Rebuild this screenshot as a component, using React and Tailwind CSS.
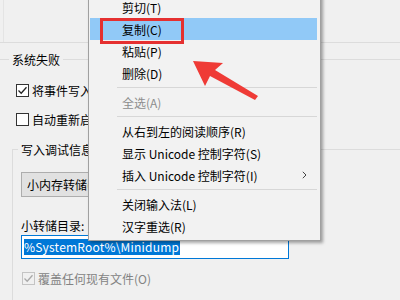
import React from "react";

const menuItems = [
  { label: "剪切(T)" },
  { label: "复制(C)", active: true },
  { label: "粘贴(P)" },
  { label: "删除(D)" },
  { sep: true },
  { label: "全选(A)", disabled: true },
  { sep: true },
  { label: "从右到左的阅读顺序(R)" },
  { label: "显示 Unicode 控制字符(S)" },
  { label: "插入 Unicode 控制字符(I)", sub: true },
  { sep: true },
  { label: "关闭输入法(L)" },
  { label: "汉字重选(R)" },
];

function CheckBox({ checked, disabled }) {
  return (
    <span
      className={
        "flex h-[13px] w-[13px] shrink-0 items-center justify-center border " +
        (disabled ? "border-[#c4c4c4] bg-[#f0f0f0]" : "border-[#333333] bg-white")
      }
    >
      {checked && (
        <svg width="11" height="11" viewBox="0 0 11 11">
          <path
            d="M1.5 5.5 L4.2 8.2 L9.5 2.2"
            fill="none"
            stroke={disabled ? "#a8a8a8" : "#222"}
            strokeWidth="1.3"
          />
        </svg>
      )}
    </span>
  );
}

function ContextMenu() {
  return (
    <div className="absolute left-[88px] top-[-7px] w-[233px] border border-[#a0a0a0] bg-[#f2f2f2] pb-[3px] pl-[1px] pr-[3px] pt-[2px] shadow-[2px_2px_3px_rgba(0,0,0,0.35)]">
      {menuItems.map((item, i) =>
        item.sep ? (
          <div key={i} className="flex h-[7px] items-center pl-[27px]">
            <div className="h-px w-full bg-[#d7d7d7]" />
          </div>
        ) : (
          <div
            key={i}
            className={
              "flex h-[22px] items-center justify-between pl-[32px] pr-[10px] " +
              (item.active ? "bg-[#91c9f7] " : "") +
              (item.disabled ? "text-[#8d8d8d]" : "text-black")
            }
          >
            <span>{item.label}</span>
            {item.sub && (
              <svg width="5" height="8" viewBox="0 0 5 8">
                <path d="M0.8 0.8 L4 4 L0.8 7.2" fill="none" stroke="#444" strokeWidth="1" />
              </svg>
            )}
          </div>
        )
      )}
    </div>
  );
}

export default function App() {
  return (
    <div className="relative h-[300px] w-[400px] overflow-hidden bg-[#f0f0f0] font-['Microsoft_YaHei','Noto_Sans_CJK_SC',sans-serif] text-[12px] leading-[17px] text-black">
      <div className="h-[43px] border-b border-[#dcdcdc]">
        <div className="ml-[3px] h-full border-l border-[#e4e4e4]" />
      </div>

      <fieldset className="-ml-[4px] mt-[8px] w-[440px] border border-[#dcdcdc] pb-[30px]">
        <legend className="ml-[12px] px-[3px]">系统失败</legend>

        <div className="mt-[16px] flex h-[13px] items-center gap-[3px] pl-[19px]">
          <CheckBox checked />
          <span className="w-[56px] overflow-hidden whitespace-nowrap">将事件写入系统日志(W)</span>
        </div>
        <div className="mt-[16px] flex h-[13px] items-center gap-[3px] pl-[19px]">
          <CheckBox />
          <span className="w-[56px] overflow-hidden whitespace-nowrap">自动重新启动(R)</span>
        </div>

        <fieldset className="ml-[15px] mt-[15px] w-[420px] border border-[#dcdcdc] pb-[30px]">
          <legend className="ml-[5px] px-[3px]">
            <span className="block w-[67px] overflow-hidden whitespace-nowrap">写入调试信息</span>
          </legend>

          <div className="ml-[8px] mt-[14px] flex h-[25px] w-[160px] items-center border border-[#adadad] bg-[#e1e1e1] pl-[5px]">
            <span className="w-[61px] overflow-hidden whitespace-nowrap">小内存转储(256 KB)</span>
          </div>

          <div className="ml-[8px] mt-[20px]">小转储目录:</div>

          <div className="ml-[8px] mt-px flex h-[24px] w-[268px] items-center border border-[#0078d7] bg-white pl-[2px]">
            <span className="bg-[#0078d7] pr-px leading-[16px] tracking-[0.2px] text-white">%SystemRoot%\Minidump</span>
          </div>

          <div className="ml-[9px] mt-[13px] flex h-[13px] items-center gap-[3px] text-[#838383]">
            <CheckBox checked disabled />
            <span>覆盖任何现有文件(O)</span>
          </div>
        </fieldset>
      </fieldset>

      <ContextMenu />

      <div className="absolute left-[100px] top-[18px] h-[26px] w-[84px] border-[3px] border-[#e53030]" />

      <svg className="pointer-events-none absolute left-0 top-0" width="400" height="300" viewBox="0 0 400 300">
        <polygon
          points="193,61 223,63 215,70 258,96 255,100 210,76 205,86"
          fill="#ef3b36"
        />
      </svg>
    </div>
  );
}
